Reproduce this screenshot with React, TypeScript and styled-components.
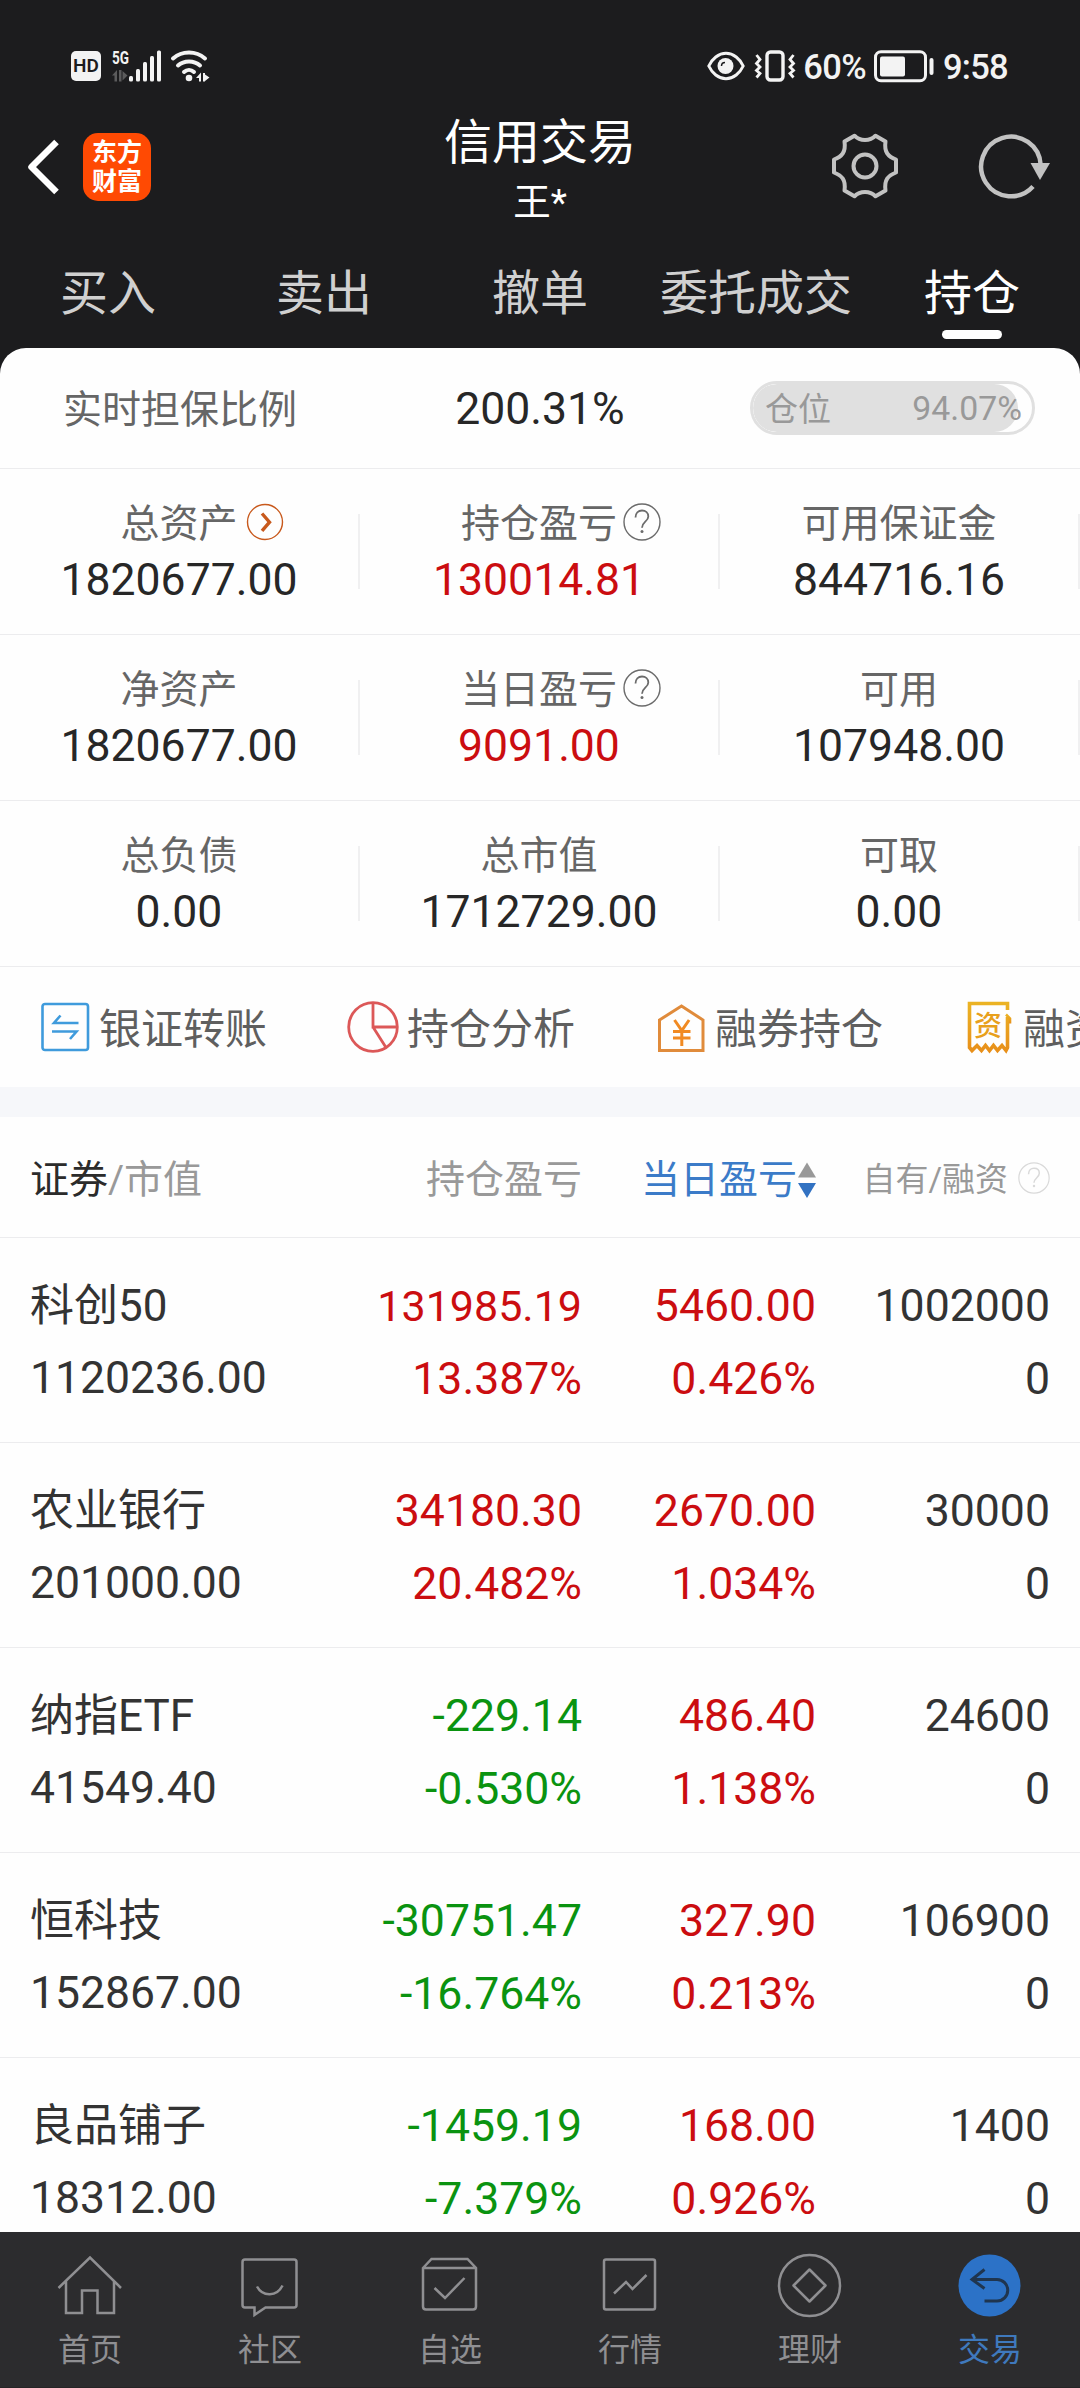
import React from 'react';
import styled, { createGlobalStyle } from 'styled-components';

const RED = '#cb0d10';
const GREEN = '#0a9310';
const LINE = '#ececee';

const GlobalStyle = createGlobalStyle`
  * { box-sizing: border-box; }
  body {
    margin: 0;
    background: #1c1c1e;
    font-family: Roboto, "Noto Sans CJK SC", sans-serif;
    font-weight: 400;
  }
  svg { display: block; flex: none; overflow: visible; }
`;

const Screen = styled.div`
  width: 1080px;
  height: 2388px;
  display: flex;
  flex-direction: column;
  overflow: hidden;
  background: #1c1c1e;
`;

/* ---------- status bar ---------- */

const StatusBar = styled.div`
  height: 113px;
  flex: none;
  padding: 18px 72px 0 71px;
  display: flex;
  align-items: center;
  justify-content: space-between;
  color: #f3f3f3;
`;

const StatusGroup = styled.div`
  display: flex;
  align-items: center;
`;

const HdBadge = styled.div`
  width: 30px;
  height: 30px;
  margin-right: 11px;
  border-radius: 5px;
  background: #f3f3f3;
  color: #1c1c1e;
  font-size: 19px;
  font-weight: 600;
  line-height: 30px;
  text-align: center;
`;

const StatusText = styled.span<{ $ml: number; $mr: number }>`
  margin-left: ${p => p.$ml}px;
  margin-right: ${p => p.$mr}px;
  font-size: 34.5px;
  font-weight: 500;
  line-height: 40px;
  letter-spacing: -0.7px;
  padding-top: 2px;
`;

/* ---------- header ---------- */

const Header = styled.header`
  height: 120px;
  flex: none;
  display: grid;
  grid-template-columns: 1fr auto 1fr;
`;

const HeaderSide = styled.div<{ $end?: boolean }>`
  height: 107px;
  display: flex;
  align-items: center;
  justify-content: ${p => (p.$end ? 'flex-end' : 'flex-start')};
  gap: ${p => (p.$end ? 81 : 25)}px;
  padding: ${p => (p.$end ? '0 30px 1px 0' : '0 0 0 27px')};
`;

const Logo = styled.div`
  width: 68px;
  height: 68px;
  padding-top: 5px;
  border-radius: 15px;
  background: #ff4a03;
  color: #fff;
  font-size: 25px;
  font-weight: 700;
  line-height: 29px;
  text-align: center;
`;

const TitleBlock = styled.div`
  display: flex;
  flex-direction: column;
  align-items: center;
  color: #fff;
`;

const Title = styled.div`
  font-size: 48px;
  line-height: 60px;
`;

const SubTitle = styled.div`
  font-size: 37.5px;
  line-height: 58px;
`;

/* ---------- tabs ---------- */

const Tabs = styled.nav`
  height: 115px;
  flex: none;
  display: grid;
  grid-template-columns: repeat(5, 1fr);
`;

const Tab = styled.div<{ $active?: boolean }>`
  padding-top: 31px;
  display: flex;
  flex-direction: column;
  align-items: center;
  color: ${p => (p.$active ? '#fff' : '#d0d0d0')};
  font-size: 48px;
  line-height: 60px;
  white-space: nowrap;

  &::after {
    content: '';
    width: 60px;
    height: 9px;
    margin-top: 6px;
    border-radius: 5px;
    background: ${p => (p.$active ? '#fff' : 'transparent')};
  }
`;

/* ---------- summary ---------- */

const Body = styled.main`
  flex: 1;
  min-height: 0;
  overflow: hidden;
  border-radius: 26px 26px 0 0;
  background: #fefefe;
`;

const Label = styled.div`
  display: flex;
  align-items: center;
  color: #666;
  font-size: 39px;
  line-height: 55px;
`;

const Value = styled.div<{ $color?: string }>`
  color: ${p => p.$color ?? '#272727'};
  font-size: 44.5px;
  line-height: 57px;
`;

const RatioRow = styled.div`
  height: 121px;
  border-bottom: 1px solid ${LINE};
  display: grid;
  grid-template-columns: repeat(3, 1fr);
  align-items: center;
  justify-items: center;

  ${Label} { padding-top: 4px; }
  ${Value} { padding-top: 2px; }
`;

const Pill = styled.div`
  width: 285px;
  height: 54px;
  margin-left: -15px;
  border: 3px solid #e0e0e0;
  border-radius: 27px;
  display: grid;
  overflow: hidden;
`;

const PillFill = styled.div`
  grid-area: 1 / 1;
  height: 48px;
  border-radius: 24px;
  background: #e0e0e0;
`;

const PillText = styled.div`
  grid-area: 1 / 1;
  padding: 0 10px 0 12px;
  display: flex;
  justify-content: space-between;
  color: #999;
  font-size: 33px;
  line-height: 51px;
`;

const PillPercent = styled.span`
  font-size: 33.8px;
  line-height: 50px;
`;

const StatRow = styled.div`
  height: 166px;
  border-bottom: 1px solid ${LINE};
  display: grid;
  grid-template-columns: repeat(3, 1fr);
`;

const Stat = styled.div`
  display: grid;
  grid-template-columns: 1fr 2px;
  align-items: center;
`;

const StatText = styled.div`
  padding-top: 2px;
  display: flex;
  flex-direction: column;
  align-items: center;
`;

const Divider = styled.div`
  height: 75px;
  background: #f0f0f1;
`;

const Overhang = styled.span<{ $gap: number }>`
  margin-left: ${p => p.$gap}px;
  margin-right: -${p => p.$gap + 38}px;
  padding-bottom: 5px;
`;

/* ---------- shortcuts ---------- */

const Shortcuts = styled.div`
  height: 120px;
  padding-left: 38px;
  display: flex;
  overflow: hidden;
`;

const Shortcut = styled.div`
  width: 308px;
  flex: none;
  display: flex;
  align-items: center;
  gap: 7px;
  color: #5f5f5f;
  font-size: 42px;
  line-height: 60px;
  white-space: nowrap;
`;

const ShortcutText = styled.span`
  padding-top: 5px;
`;

const Band = styled.div`
  height: 30px;
  background: #f6f7fa;
`;

/* ---------- holdings ---------- */

const columns = '322px 230px 234px 234px';

const TableHead = styled.div`
  height: 121px;
  padding: 5px 30px 0;
  border-bottom: 1px solid ${LINE};
  display: grid;
  grid-template-columns: ${columns};
  align-items: center;
  color: #999;
  font-size: 39px;
  line-height: 58px;
`;

const HeadCell = styled.div<{ $color?: string; $size?: number }>`
  display: flex;
  justify-content: flex-end;
  align-items: center;
  white-space: nowrap;
  color: ${p => p.$color ?? '#999'};
  font-size: ${p => p.$size ?? 39}px;
`;

const HeadHelp = styled.span`
  margin-left: 10px;
  padding-bottom: 3px;
`;

const Dark = styled.span`
  color: #2b2b2b;
`;

const Holding = styled.div`
  height: 205px;
  padding: 32px 30px 0;
  border-bottom: 1px solid ${LINE};
  display: grid;
  grid-template-columns: ${columns};
  grid-auto-rows: 73px;
`;

const Name = styled.div`
  color: #333;
  font-size: 44px;
  line-height: 72px;
`;

const Amount = styled.div`
  color: #333;
  font-size: 44.5px;
  line-height: 70px;
`;

const Num = styled.div<{ $color?: string; $tight?: boolean }>`
  justify-self: end;
  color: ${p => p.$color ?? '#333'};
  font-size: ${p => (p.$tight ? 43 : 44.6)}px;
  line-height: 72px;
`;

/* ---------- bottom navigation ---------- */

const BottomNav = styled.nav`
  height: 156px;
  flex: none;
  display: grid;
  grid-template-columns: repeat(6, 1fr);
  background: #2c2c2e;
  border-bottom: 1px solid #262426;
`;

const NavItem = styled.div<{ $active?: boolean }>`
  padding-top: 22px;
  display: flex;
  flex-direction: column;
  align-items: center;
  color: ${p => (p.$active ? '#3f79bd' : '#8f8f92')};
  font-size: 32px;
  line-height: 44px;

  svg { margin-bottom: 10px; }
`;

/* ---------- icons ---------- */

const HelpIcon = ({ size = 38, color = '#6b6b6b' }: { size?: number; color?: string }) => (
  <svg width={size} height={size} viewBox="0 0 38 38" fill="none" stroke={color} strokeWidth="1.4">
    <circle cx="19" cy="19" r="18" />
    <path d="M12.5 14.5c0-4.500 2.800-7 6.500-7s6.300 2.300 6.300 5.900c0 5.100-6.300 5.600-6.300 11.300" strokeWidth="1.8" />
    <circle cx="19" cy="28.500" r="1.500" fill={color} stroke="none" />
  </svg>
);

const MoreIcon = () => (
  <svg width="38" height="38" viewBox="0 0 38 38" fill="none" stroke="#c8591c">
    <circle cx="19" cy="19" r="17.500" strokeWidth="1.4" />
    <path d="M16 10.500l7.500 8.700-7.500 8.700" strokeWidth="3.400" />
  </svg>
);

const SignalIcon = () => (
  <svg width="50" height="32" viewBox="112 49 50 32" fill="#f3f3f3">
    <text x="112" y="63" fontSize="18.500" fontWeight="700" textLength="17" lengthAdjust="spacingAndGlyphs">5G</text>
    <path d="M112 74.500l5-5.500v11.500h-2.500v-6zM119 69h2.500v11.500H119zM122.500 70l5 4.500-5 5z" fill="#5b5b5c" />
    <rect x="129" y="75" width="4" height="5.500" rx="1.500" />
    <rect x="136" y="68" width="4" height="12.500" rx="1.500" />
    <rect x="143" y="61" width="4" height="19.500" rx="1.500" />
    <rect x="150" y="55" width="4" height="25.500" rx="1.500" />
    <rect x="157" y="49.500" width="4" height="31" rx="1.500" />
  </svg>
);

const WifiSvg = styled.svg`
  margin-left: 9px;
`;

const WifiIcon = () => (
  <WifiSvg width="38" height="32" viewBox="171 49 38 32" fill="none" stroke="#f3f3f3" strokeWidth="4" strokeLinecap="round">
    <path d="M173 57.500c9-8 23-8 32 0" />
    <path d="M178 64.500c6-5.500 16-5.500 22 0" />
    <path d="M184 71c3-2.800 7-2.800 10 0" />
    <circle cx="189" cy="77" r="3.300" fill="#f3f3f3" stroke="none" />
    <path d="M196 77l5-5.500v9h-2V77zM203 72h2v8.500h-2zM205 73.500l4.500 3-4.500 3.500z" fill="#f3f3f3" stroke="none" />
  </WifiSvg>
);

const EyeIcon = () => (
  <svg width="38" height="30" viewBox="0 0 38 30" fill="none" stroke="#f3f3f3" strokeWidth="3">
    <path d="M1.800 15C5 8 11.500 2.300 19 2.300S33 8 36.200 15C33 22 26.500 27.700 19 27.700S5 22 1.800 15z" />
    <circle cx="18.500" cy="15" r="8" fill="#f3f3f3" stroke="none" />
    <path d="M14.500 15c0-2 1.500-3.500 3.500-3.500" stroke="#1c1c1e" strokeWidth="1.500" />
  </svg>
);

const VibrateSvg = styled.svg`
  margin-left: 10px;
`;

const VibrateIcon = () => (
  <VibrateSvg width="40" height="32" viewBox="0 0 40 32" fill="none" stroke="#f3f3f3" strokeWidth="3.400">
    <rect x="12" y="2" width="16" height="28" rx="3.500" />
    <path d="M1.500 5l3.500 4.500-3.500 4 3.500 3.500-3.500 3.500 3.500 3-3.500 4M38.500 5L35 9.500l3.500 4L35 17l3.500 3.500-3.500 3 3.500 4" strokeWidth="2.800" />
  </VibrateSvg>
);

const BatteryIcon = () => (
  <svg width="61" height="32" viewBox="0 0 61 32" fill="none" stroke="#f3f3f3" strokeWidth="3">
    <rect x="1.500" y="1.700" width="50" height="29" rx="5.500" />
    <rect x="6" y="6.500" width="25" height="20" rx="2" fill="#f3f3f3" stroke="none" />
    <rect x="55.500" y="8" width="4" height="17" rx="2" fill="#f3f3f3" stroke="none" />
  </svg>
);

const BackIcon = () => (
  <svg width="31" height="54" viewBox="0 0 31 54" fill="none" stroke="#fff" strokeWidth="6.500">
    <path d="M29.500 2L4.500 27l25 25" strokeLinejoin="round" />
  </svg>
);

const GearIcon = () => (
  <svg width="66" height="66" viewBox="-33 -33 66 66" fill="none" stroke="#c2c2c2" strokeWidth="4" strokeLinejoin="round">
    <path d="M-10.500-30.300C-5-24.500 5-24.500 10.500-30.300L20.500-24.500C19-14 23-9.500 31-6.500V6.500C23 9.500 19 14 20.500 24.500L10.500 30.300C5 24.500-5 24.500-10.500 30.300L-20.500 24.500C-19 14-23 9.500-31 6.500V-6.500C-23-9.500-19-14-20.500-24.500Z" />
    <circle r="11.500" />
  </svg>
);

const RefreshIcon = () => (
  <svg width="71" height="66" viewBox="979 133 71 66" fill="none" stroke="#c2c2c2" strokeWidth="4.500">
    <path d="M1033 186.500A29.800 29.800 0 1 1 1040.700 165" />
    <path d="M1030.500 163h19.500l-10 17z" fill="#c2c2c2" stroke="none" />
  </svg>
);

const SortSvg = styled.svg`
  margin-left: 1px;
`;

const SortIcon = () => (
  <SortSvg width="18" height="38" viewBox="0 0 18 38">
    <path d="M9 1.500l9 15H0z" fill="#999" />
    <path d="M9 37l9-15H0z" fill="#3272c2" />
  </SortSvg>
);

const TransferIcon = () => (
  <svg width="54" height="54" viewBox="0 0 54 54" fill="none" stroke="#3f9bdc" strokeWidth="2.600">
    <rect x="4.500" y="4" width="45.500" height="46" rx="2.500" />
    <path d="M40.500 23H16L22.500 15.500M14 31.500h24.500L32 39" />
  </svg>
);

const PieIcon = () => (
  <svg width="54" height="54" viewBox="0 0 54 54" fill="none" stroke="#dc5858" strokeWidth="2.800">
    <circle cx="27" cy="27" r="24.300" />
    <path d="M27 3v24h24M27 27l13 20.500" />
  </svg>
);

const VaultIcon = () => (
  <svg width="54" height="54" viewBox="0 0 54 54" fill="none" stroke="#e08b3b" strokeWidth="3">
    <path d="M5.500 20L27.500 6l21.500 14V50.500H5.500z" />
    <path d="M20.500 20l7.300 10.500L35.100 20M27.800 30v16M19 31.500h17.500M19 38h17.500" stroke="#f18a22" />
  </svg>
);

const SlipIcon = () => (
  <svg width="54" height="54" viewBox="0 0 54 54" fill="none" stroke="url(#slip)" strokeWidth="3.600">
    <defs>
      <linearGradient id="slip" x1="0" y1="1" x2="0" y2="0">
        <stop offset="0" stopColor="#e8901a" />
        <stop offset="1" stopColor="#ebb324" />
      </linearGradient>
    </defs>
    <path d="M45.500 10V3.500H7.500v44l2.500 3 5-5 4.500 5 4-5 4 5 4-5 4 5 4.500-5 4 5 1.500-3V17" />
    <path d="M44 14.500l4 4v5" strokeWidth="2.600" />
    <text x="26" y="36" fontSize="28" fill="#e8a01c" stroke="none" fontWeight="500" textAnchor="middle">资</text>
  </svg>
);

const NavSvg = ({ children }: { children: React.ReactNode }) => (
  <svg width="64" height="64" viewBox="0 0 64 64" fill="none" stroke="#8f8f92" strokeWidth="2.500">
    {children}
  </svg>
);

/* ---------- data ---------- */

type StatData = { label: string; value: string; color?: string; icon?: 'more' | 'help' };

const stats: StatData[][] = [
  [
    { label: '总资产', value: '1820677.00', icon: 'more' },
    { label: '持仓盈亏', value: '130014.81', color: RED, icon: 'help' },
    { label: '可用保证金', value: '844716.16' },
  ],
  [
    { label: '净资产', value: '1820677.00' },
    { label: '当日盈亏', value: '9091.00', color: RED, icon: 'help' },
    { label: '可用', value: '107948.00' },
  ],
  [
    { label: '总负债', value: '0.00' },
    { label: '总市值', value: '1712729.00' },
    { label: '可取', value: '0.00' },
  ],
];

const holdings = [
  { name: '科创50', value: '1120236.00', pl: '131985.19', plPct: '13.387%', day: '5460.00', dayPct: '0.426%', own: '1002000' },
  { name: '农业银行', value: '201000.00', pl: '34180.30', plPct: '20.482%', day: '2670.00', dayPct: '1.034%', own: '30000' },
  { name: '纳指ETF', value: '41549.40', pl: '-229.14', plPct: '-0.530%', day: '486.40', dayPct: '1.138%', own: '24600' },
  { name: '恒科技', value: '152867.00', pl: '-30751.47', plPct: '-16.764%', day: '327.90', dayPct: '0.213%', own: '106900' },
  { name: '良品铺子', value: '18312.00', pl: '-1459.19', plPct: '-7.379%', day: '168.00', dayPct: '0.926%', own: '1400' },
];

const shortcuts = [
  { label: '银证转账', icon: <TransferIcon /> },
  { label: '持仓分析', icon: <PieIcon /> },
  { label: '融券持仓', icon: <VaultIcon /> },
  { label: '融资', icon: <SlipIcon /> },
];

const navItems = [
  { label: '首页', icon: <path d="M.5 34L32 3.500 63 34M8 27.500V59h16V36.500h15.500V59H56V27.500" /> },
  {
    label: '社区',
    icon: (
      <>
        <path d="M7 5.500h49q2.500 0 2.500 2.500v43q0 2.500-2.500 2.500H27.500L16.500 61v-7.500H7Q4.500 53.500 4.500 51V8Q4.500 5.500 7 5.500z" />
        <path d="M19 32.500c5.500 10.500 20 10.500 25.500-1" />
      </>
    ),
  },
  {
    label: '自选',
    icon: (
      <>
        <path d="M5 14l8.500-9h36L58 14v38.500q0 3-3 3H8q-3 0-3-3zM5 14h53" />
        <path d="M16.500 34L27 44l19.500-20" />
      </>
    ),
  },
  {
    label: '行情',
    icon: (
      <>
        <rect x="6" y="5.500" width="51" height="50" rx="2" />
        <path d="M16 39.500L28 28l6.500 7L48.500 21" />
      </>
    ),
  },
  {
    label: '理财',
    icon: (
      <>
        <circle cx="31.500" cy="31.500" r="30.500" />
        <path d="M31.500 15.500l16 16-16 16-16-16z" strokeLinejoin="round" />
      </>
    ),
  },
  {
    label: '交易',
    active: true,
    icon: (
      <>
        <circle cx="31.500" cy="31.500" r="31" fill="#2c72c7" stroke="none" />
        <path d="M26.500 15.500L14 25.500l12.500 9M14 25.500H39a10.700 10.700 0 0 1 0 21.500H26.500" stroke="#1f354f" strokeWidth="3" />
      </>
    ),
  },
];

const tone = (v: string) => (v.startsWith('-') ? GREEN : RED);

export default function App() {
  return (
    <Screen>
      <GlobalStyle />
      <StatusBar>
        <StatusGroup>
          <HdBadge>HD</HdBadge>
          <SignalIcon />
          <WifiIcon />
        </StatusGroup>
        <StatusGroup>
          <EyeIcon />
          <VibrateIcon />
          <StatusText $ml={8} $mr={8}>60%</StatusText>
          <BatteryIcon />
          <StatusText $ml={8} $mr={0}>9:58</StatusText>
        </StatusGroup>
      </StatusBar>

      <Header>
        <HeaderSide>
          <BackIcon />
          <Logo>东方<br />财富</Logo>
        </HeaderSide>
        <TitleBlock>
          <Title>信用交易</Title>
          <SubTitle>王*</SubTitle>
        </TitleBlock>
        <HeaderSide $end>
          <GearIcon />
          <RefreshIcon />
        </HeaderSide>
      </Header>

      <Tabs>
        {['买入', '卖出', '撤单', '委托成交', '持仓'].map(t => (
          <Tab key={t} $active={t === '持仓'}>{t}</Tab>
        ))}
      </Tabs>

      <Body>
        <RatioRow>
          <Label>实时担保比例</Label>
          <Value>200.31%</Value>
          <Pill>
            <PillFill style={{ width: '95%' }} />
            <PillText><span>仓位</span><PillPercent>94.07%</PillPercent></PillText>
          </Pill>
        </RatioRow>

        {stats.map((row, i) => (
          <StatRow key={i}>
            {row.map(s => (
              <Stat key={s.label}>
                <StatText>
                  <Label>
                    {s.label}
                    {s.icon && (
                      <Overhang $gap={s.icon === 'more' ? 8 : 6}>
                        {s.icon === 'more' ? <MoreIcon /> : <HelpIcon />}
                      </Overhang>
                    )}
                  </Label>
                  <Value $color={s.color}>{s.value}</Value>
                </StatText>
                <Divider />
              </Stat>
            ))}
          </StatRow>
        ))}

        <Shortcuts>
          {shortcuts.map(s => (
            <Shortcut key={s.label}>{s.icon}<ShortcutText>{s.label}</ShortcutText></Shortcut>
          ))}
        </Shortcuts>
        <Band />

        <TableHead>
          <div><Dark>证券</Dark>/市值</div>
          <HeadCell>持仓盈亏</HeadCell>
          <HeadCell $color="#3b7bc8">当日盈亏<SortIcon /></HeadCell>
          <HeadCell $size={33}>
            自有/融资
            <HeadHelp><HelpIcon size={32} color="#d9d9d9" /></HeadHelp>
          </HeadCell>
        </TableHead>

        {holdings.map(h => (
          <Holding key={h.name}>
            <Name>{h.name}</Name>
            <Num $color={tone(h.pl)} $tight={h.pl.length === 9 && !h.pl.startsWith('-')}>{h.pl}</Num>
            <Num $color={tone(h.day)}>{h.day}</Num>
            <Num>{h.own}</Num>
            <Amount>{h.value}</Amount>
            <Num $color={tone(h.plPct)}>{h.plPct}</Num>
            <Num $color={tone(h.dayPct)}>{h.dayPct}</Num>
            <Num>0</Num>
          </Holding>
        ))}
      </Body>

      <BottomNav>
        {navItems.map(n => (
          <NavItem key={n.label} $active={n.active}>
            <NavSvg>{n.icon}</NavSvg>
            {n.label}
          </NavItem>
        ))}
      </BottomNav>
    </Screen>
  );
}
